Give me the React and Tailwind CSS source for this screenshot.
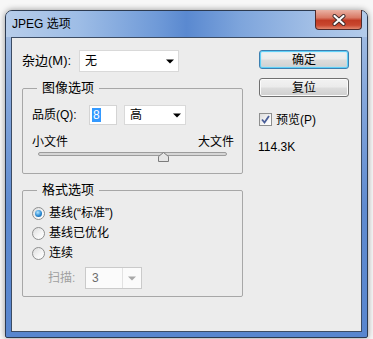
import React from 'react';

const Arrow = ({ color = '#000' }) => (
  <svg width="8" height="5" viewBox="0 0 8 5">
    <path d="M0 0.5h8L4 4.5z" fill={color} />
  </svg>
);

const Select = ({ value, className }) => (
  <div className={`flex items-center justify-between bg-white border border-[#d9d9d9] pl-[5px] pr-[4px] ${className}`}>
    <span className="leading-none">{value}</span>
    <Arrow />
  </div>
);

const Radio = ({ checked, label }) => (
  <div className="flex items-center gap-[4px] h-[20px]">
    <div className="w-[13px] h-[13px] rounded-full border border-[#8e8f8f] bg-[linear-gradient(135deg,#dcdcdc_0%,#f6f6f6_60%,#ffffff_100%)] flex items-center justify-center">
      {checked && <div className="w-[7px] h-[7px] rounded-full bg-[radial-gradient(circle_at_40%_35%,#b4e6ff_0%,#2a8ad4_55%,#0c4d8a_100%)]" />}
    </div>
    <span>{label}</span>
  </div>
);

const Button = ({ label, primary }) => (
  <div
    className={`w-[90px] h-[19px] rounded-[3px] border flex items-center justify-center bg-[linear-gradient(180deg,#f2f2f2_0%,#ebebeb_48%,#dddddd_52%,#cfcfcf_100%)] ${
      primary
        ? 'border-[#3c7fb1] shadow-[inset_0_0_0_1px_#5fd0f8,inset_0_0_2px_1px_#a6e2fa]'
        : 'border-[#707070] shadow-[inset_0_0_0_1px_#fbfbfb]'
    }`}
  >
    <span className="leading-none">{label}</span>
  </div>
);

export default function App() {
  return (
    <div className="w-[373px] h-[339px] bg-[#f7f7f7] pt-[10px] pl-[5px] text-[12px] text-black font-['Liberation_Sans','Noto_Sans_CJK_SC',sans-serif]">
      <div className="relative w-[363px] h-[328px] rounded-t-[7px] rounded-b-[2px] border border-[#2c3a50] bg-[linear-gradient(180deg,#a9c2e4_0%,#86a8dc_25%,#5f8bd0_60%,#5886cf_100%)] shadow-[0_0_6px_rgba(0,0,0,0.4)] flex flex-col px-[5px] pb-[5px]">
        <div className="-mx-[5px] h-[26px] rounded-t-[6px] bg-[linear-gradient(90deg,#b7cdea_0%,#9ebde6_20%,#6f9ad8_42%,#5a89d0_50%,#7ea5dc_65%,#a2bfe6_85%,#b3cbea_100%)] flex items-center pl-[6px]">
          <span className="text-[12px] leading-none text-black">JPEG 选项</span>
        </div>
        <div className="absolute top-[-1px] right-[5px] w-[47px] h-[20px] rounded-b-[4px] border border-[#4f2a2a] border-t-0 bg-[linear-gradient(180deg,#eab2a4_0%,#d97a66_40%,#c13b24_55%,#c9472f_80%,#e2876e_100%)] flex items-center justify-center">
          <svg width="14" height="12" viewBox="0 0 14 12">
            <path d="M2.5 2l9 8M11.5 2l-9 8" stroke="#3b2a2a" strokeWidth="4" strokeLinecap="round" />
            <path d="M2.5 2l9 8M11.5 2l-9 8" stroke="#ffffff" strokeWidth="2.2" strokeLinecap="round" />
          </svg>
        </div>

        <div className="flex-1 border border-[#3c4c64] bg-[#ececec] flex">
          <div className="ml-[10px] mt-[12px] w-[221px] flex flex-col">
            <div className="flex items-center h-[22px]">
              <span className="w-[57px] text-[13px]">杂边(M):</span>
              <Select value="无" className="w-[100px] h-[22px]" />
            </div>

            <fieldset className="mt-[9px] border border-[#a7a7a7] rounded-[2px]">
              <legend className="ml-[14px] px-[5px] text-[13px] leading-[14px]">图像选项</legend>
              <div className="pt-[10px] pb-[9px]">
                <div className="flex items-center h-[20px] pl-[9px]">
                  <span className="w-[57px]">品质(Q):</span>
                  <div className="w-[28px] h-[20px] bg-white border border-[#d4d4d4] flex items-center pl-[2px]">
                    <span className="bg-[#3399ff] text-white leading-[14px] px-[1px]">8</span>
                  </div>
                  <Select value="高" className="ml-[7px] w-[62px] h-[20px]" />
                </div>
                <div className="mt-[10px] flex justify-between pl-[9px] pr-[8px] leading-[14px] h-[14px]">
                  <span>小文件</span>
                  <span>大文件</span>
                </div>
                <div className="relative ml-[15px] mt-[1px] w-[189px] h-[12px]">
                  <div className="mt-[3px] h-[4px] rounded-[2px] border border-[#9c9c9c] bg-[#d6d6d6]" />
                  <svg className="absolute left-[120px] top-0" width="11" height="10" viewBox="0 0 11 10">
                    <path d="M0.5 9.5V4.5L5.5 0.5l5 4v5z" fill="#e6e6e6" stroke="#7c7c7c" />
                  </svg>
                </div>
              </div>
            </fieldset>

            <fieldset className="mt-[9px] border border-[#a7a7a7] rounded-[2px]">
              <legend className="ml-[14px] px-[5px] text-[13px] leading-[14px]">格式选项</legend>
              <div className="pt-[6px] pb-[7px] pl-[9px]">
                <Radio checked label="基线(“标准”)" />
                <Radio label="基线已优化" />
                <Radio label="连续" />
                <div className="mt-[4px] flex items-center h-[22px] pl-[16px]">
                  <span className="w-[37px] text-[#a0a0a0]">扫描:</span>
                  <div className="w-[57px] h-[22px] border border-[#cacaca] bg-[#fbfbfb] flex items-center">
                    <span className="flex-1 pl-[6px] text-[#6d6d6d] leading-none">3</span>
                    <div className="w-[19px] h-full border-l border-[#e2e2e2] flex items-center justify-center">
                      <Arrow color="#a8a8a8" />
                    </div>
                  </div>
                </div>
              </div>
            </fieldset>
          </div>

          <div className="ml-[16px] mt-[12px] flex flex-col">
            <Button label="确定" primary />
            <div className="mt-[9px]">
              <Button label="复位" />
            </div>
            <div className="mt-[16px] flex items-center gap-[4px] h-[13px]">
              <div className="w-[13px] h-[13px] border border-[#8e8f8f] bg-[linear-gradient(135deg,#dcdcdc_0%,#f6f6f6_60%,#ffffff_100%)] flex items-center justify-center">
                <svg width="9" height="9" viewBox="0 0 9 9">
                  <path d="M1 4.5l2.5 3L8 1" stroke="#4a5e98" strokeWidth="1.8" fill="none" />
                </svg>
              </div>
              <span>预览(P)</span>
            </div>
            <div className="mt-[14px] leading-[14px] -ml-[1px]">114.3K</div>
          </div>
        </div>
      </div>
    </div>
  );
}
